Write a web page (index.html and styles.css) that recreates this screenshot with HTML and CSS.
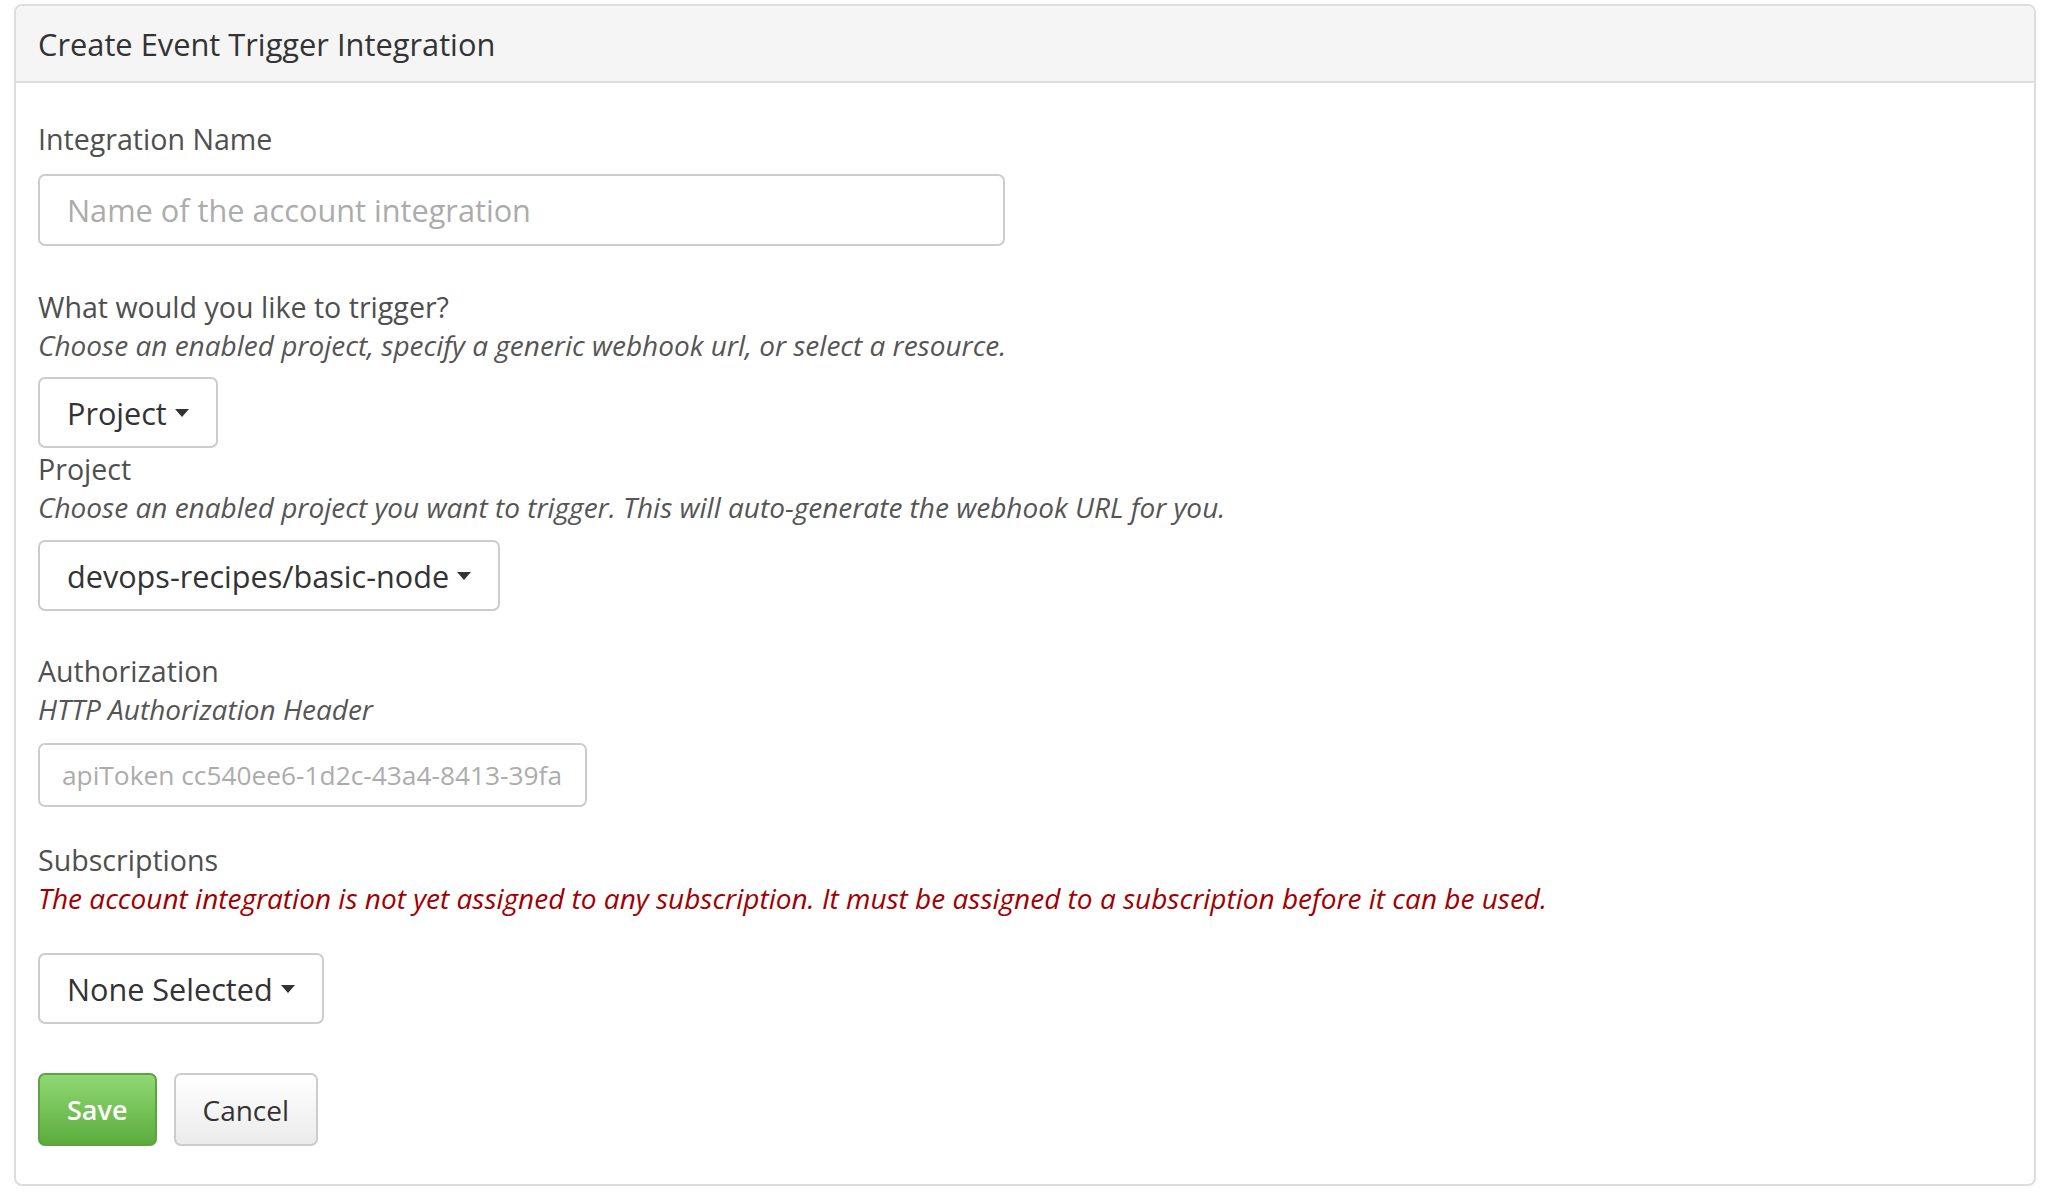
FILE: index.html
```html
<!DOCTYPE html>
<html lang="en">
<head>
<meta charset="utf-8">
<title>Create Event Trigger Integration</title>
<link rel="stylesheet" href="styles.css">
</head>
<body>
<div class="panel">
  <div class="panel-heading">
    <h3 class="panel-title">Create Event Trigger Integration</h3>
  </div>
  <div class="panel-body">
    <div class="field">
      <label class="label">Integration Name</label>
      <input class="input input-name" type="text" placeholder="Name of the account integration">
    </div>

    <div class="field field-trigger">
      <label class="label">What would you like to trigger?</label>
      <div class="help">Choose an enabled project, specify a generic webhook url, or select a resource.</div>
      <button class="btn btn-default dropdown" type="button">Project<span class="caret"></span></button>
    </div>

    <div class="field field-project">
      <label class="label">Project</label>
      <div class="help">Choose an enabled project you want to trigger. This will auto-generate the webhook URL for you.</div>
      <button class="btn btn-default dropdown" type="button">devops-recipes/basic-node<span class="caret"></span></button>
    </div>

    <div class="field field-auth">
      <label class="label">Authorization</label>
      <div class="help">HTTP Authorization Header</div>
      <input class="input input-auth" type="text" placeholder="apiToken cc540ee6-1d2c-43a4-8413-39fa">
    </div>

    <div class="field field-subs">
      <label class="label">Subscriptions</label>
      <div class="help help-error">The account integration is not yet assigned to any subscription. It must be assigned to a subscription before it can be used.</div>
      <button class="btn btn-default dropdown btn-subs" type="button">None Selected<span class="caret"></span></button>
    </div>

    <div class="actions">
      <button class="btn btn-success" type="button">Save</button>
      <button class="btn btn-cancel" type="button">Cancel</button>
    </div>
  </div>
</div>
</body>
</html>
```

FILE: styles.css
```css
* { box-sizing: border-box; }

html, body {
  background: #ffffff;
}

body {
  margin: 0;
  padding: 4px 16px 8px 14px;
  font-family: "Open Sans", "Liberation Sans", sans-serif;
  font-size: 28px;
  line-height: 38px;
  color: #333333;
}

.panel {
  border: 2px solid #dddddd;
  border-radius: 8px;
  background: #ffffff;
  overflow: hidden;
}

.panel-heading {
  height: 77px;
  padding: 0 22px;
  display: flex;
  align-items: center;
  background: #f5f5f5;
  border-bottom: 2px solid #dddddd;
}

.panel-title {
  margin: 0;
  font-size: 30.8px;
  font-weight: 400;
  color: #333333;
  line-height: 38px;
}

.panel-body {
  padding: 37px 22px 38px 22px;
  display: flex;
  flex-direction: column;
  align-items: flex-start;
}

.field {
  display: flex;
  flex-direction: column;
  align-items: flex-start;
}

.label {
  display: block;
  font-size: 28.6px;
  line-height: 38px;
  color: #4f4f4f;
  font-weight: 400;
}

.help {
  font-style: italic;
  color: #555555;
  font-size: 28px;
  line-height: 38px;
}

.help-error {
  color: #a00000;
}

.input {
  display: block;
  font-family: "Open Sans", "Liberation Sans", sans-serif;
  border: 2px solid #cccccc;
  border-radius: 7px;
  background: #ffffff;
  color: #555555;
  outline: none;
}

.input::placeholder {
  color: #acacac;
  opacity: 1;
}

.input-name {
  margin-top: 16px;
  width: 967px;
  height: 72px;
  padding: 0 27px;
  font-size: 30.7px;
}

.input-auth {
  margin-top: 15px;
  width: 549px;
  height: 64px;
  padding: 0 22px;
  font-size: 26.3px;
}

.field-trigger { margin-top: 42px; }
.field-trigger .btn { margin-top: 13px; }

.field-project { margin-top: 2px; }
.field-project .btn { margin-top: 14px; }

.field-auth { margin-top: 41px; }

.field-subs { margin-top: 34px; }
.field-subs .btn { margin-top: 36px; }

.btn {
  display: inline-flex;
  align-items: center;
  height: 71px;
  padding: 0 27px;
  font-family: "Open Sans", "Liberation Sans", sans-serif;
  font-size: 30.6px;
  line-height: 38px;
  border-radius: 7px;
  border: 2px solid #cccccc;
  background: #ffffff;
  color: #333333;
  cursor: pointer;
}

.caret {
  display: inline-block;
  width: 0;
  height: 0;
  margin-left: 8px;
  border-top: 8px solid #333333;
  border-left: 7.5px solid transparent;
  border-right: 7.5px solid transparent;
}

.actions {
  margin-top: 49px;
  display: flex;
  gap: 17px;
}

.btn-success {
  height: 73px;
  padding: 0 27px;
  font-size: 27px;
  font-weight: 600;
  color: #ffffff;
  border: 2px solid #5da342;
  background: linear-gradient(to bottom, #8fd972 0%, #5cac3d 100%);
}

.btn-cancel {
  height: 73px;
  padding: 0 27px;
  font-size: 28px;
  color: #333333;
  border: 2px solid #cccccc;
  background: linear-gradient(to bottom, #ffffff 0%, #ebebeb 100%);
}
```
